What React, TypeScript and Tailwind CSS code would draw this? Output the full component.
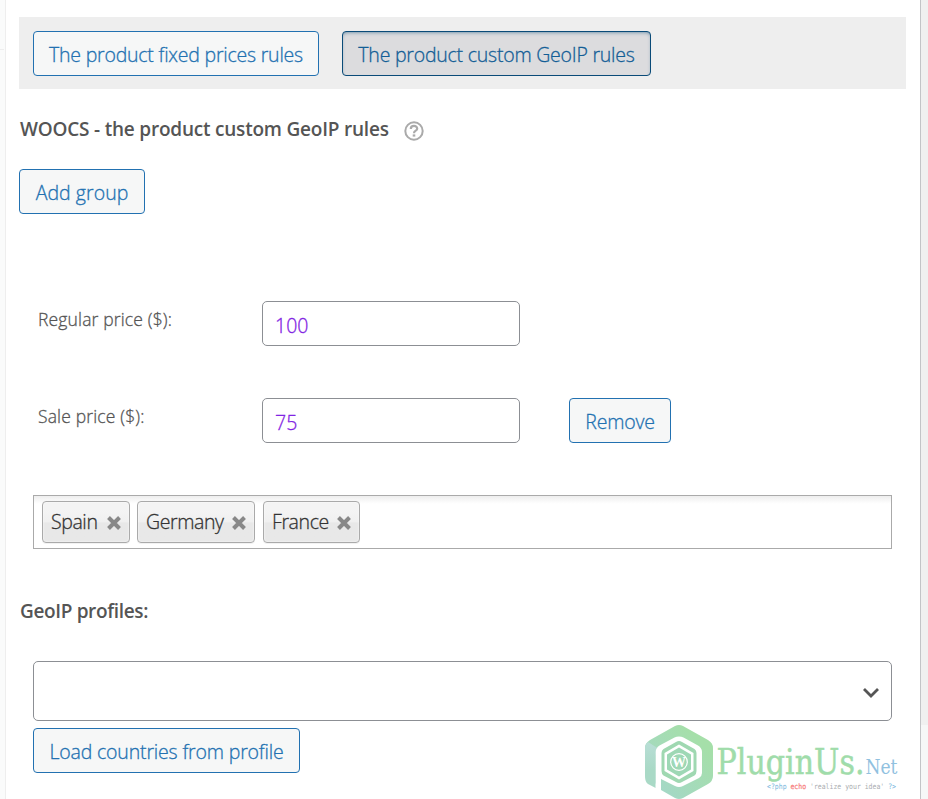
import type { ReactNode } from 'react';

const outline =
  'flex h-[45px] shrink-0 items-center justify-center rounded-[4px] border border-[#2271b1] bg-[#f6f7f7] pt-[3px] text-[19.5px] font-light whitespace-nowrap text-[#2271b1] [-webkit-text-stroke:0.3px]';

const field =
  'h-[45px] w-[258px] rounded-[5px] border border-[#8c8f94] bg-white pt-1 pl-3 text-[19.5px] font-light text-[#8224e3] outline-none [-webkit-text-stroke:0.3px]';

const label =
  'w-[224px] pt-[5px] text-[17.5px] font-light tracking-[0.15px] text-[#555] [-webkit-text-stroke:0.3px]';

function Chip({ className, children }: { className: string; children: ReactNode }) {
  return (
    <div
      className={`flex h-[42px] items-center justify-between rounded-[4px] border border-[#aaa] bg-linear-to-b from-[#f4f4f4] from-20% via-[#f0f0f0] via-50% to-[#e8e8e8] to-52% pr-[7px] pl-2 text-[19.5px] font-light tracking-[-0.4px] text-[#333] shadow-[inset_0_0_2px_#fff,0_1px_0_rgba(0,0,0,0.05)] [-webkit-text-stroke:0.3px] ${className}`}
    >
      <span className="whitespace-nowrap">{children}</span>
      <svg width="16" height="16" viewBox="0 0 16 16" className="mt-0.5 shrink-0">
        <path d="M2.500 2.500 13.500 13.500M13.500 2.500 2.500 13.500" stroke="#888" strokeWidth="4" />
      </svg>
    </div>
  );
}

function Logo() {
  return (
    <svg width="260" height="75" viewBox="0 0 260 75" className="shrink-0">
      <defs>
        <linearGradient id="mark" x1="1" y1="0" x2="0" y2="1">
          <stop offset="0.2" stopColor="#a5dfa9" />
          <stop offset="1" stopColor="#a4d6ce" />
        </linearGradient>
        <linearGradient id="side" x1="0" y1="0" x2="0" y2="1">
          <stop offset="0" stopColor="#b9ded6" />
          <stop offset="0.6" stopColor="#a9d9c6" />
        </linearGradient>
      </defs>
      <path
        d="M30 1Q34 -1 38 1L63 15Q68 18 68 23V51Q68 56 63 59L38 73Q34 75 30 73L16 65V47L34 57.500 52 47V27L34 16.500 16 27V61L5 56Q0 54 0 50V23Q0 18 5 15Z"
        fill="url(#mark)"
      />
      <path d="M3 17 14 24 10.700 30V63L3 59Q0 57 0 51V23Q0 19 3 17Z" fill="url(#side)" />
      <path
        d="M34 11.500Q36.500 11.500 38.500 12.500L53 20.500Q57 23 57 27V48Q57 51 54 53L38 61Q34 63 30 61L16 54V70L10.700 67V27Q10.700 23 14.500 20.500L29.500 12.500Q31.500 11.500 34 11.500Z"
        fill="#fff"
      />
      <path d="M34 16Q35.500 16 37 17L49.500 24Q51.500 25.500 51.500 28V46Q51.500 49 49.500 50.500L37 57Q34 59 31 57L18.500 50.500Q16.500 49 16.500 46V28Q16.500 25.500 18.500 24L31 17Q32.500 16 34 16Z" fill="#9fd8b1" />
      <path d="M34 19.500 48.500 28V46L34 54.500 19.500 46V28Z" fill="#fff" />
      <path d="M34 22.500 46 29.500V44.500L34 51.500 22 44.500V29.500Z" fill="#9ed8b5" />
      <circle cx="34" cy="37" r="8.300" fill="none" stroke="#fff" strokeWidth="1.200" />
      <text x="34" y="42" textAnchor="middle" fontSize="14" fontWeight="700" fontFamily="Liberation Serif, serif" fill="#fff">
        W
      </text>
      <text x="71.500" y="49" fontSize="36" textLength="148" lengthAdjust="spacingAndGlyphs" fontFamily="DejaVu Serif, serif" fill="#a0dcaa" stroke="#a0dcaa" strokeWidth="0.500">
        PluginUs.
      </text>
      <text x="220.500" y="49" fontSize="19.500" textLength="32" lengthAdjust="spacingAndGlyphs" fontFamily="DejaVu Serif Condensed, DejaVu Serif, serif" fill="#91c1df">
        Net
      </text>
      <text x="122" y="63.500" fontSize="7.500" textLength="129" lengthAdjust="spacingAndGlyphs" fontFamily="DejaVu Sans Mono, monospace" fill="#a9acaf" xmlSpace="preserve">
        <tspan fill="#76b5dc">{'<?php '}</tspan>
        <tspan fill="#f77878" stroke="#f77878" strokeWidth="0.200">echo</tspan>
        <tspan>{" 'realize your idea' "}</tspan>
        <tspan fill="#76b5dc">?&gt;</tspan>
      </text>
    </svg>
  );
}

export default function App() {
  return (
    <div className="flex h-[799px] w-[928px] overflow-hidden bg-white font-['Open_Sans','Noto_Sans',sans-serif]">
      <div className="w-[6px] shrink-0 border-r border-[#eee] bg-[#fafbfb]">
        <div className="h-[50px] w-1 border-b border-[#eee]" />
      </div>

      <main className="flex w-[914px] shrink-0 flex-col pt-[17px] pl-[13px]">
        <div className="flex h-[72px] w-[887px] shrink-0 items-center gap-[23px] bg-[#eee] px-[14px]">
          <button className={`${outline} w-[286px] tracking-[-0.22px]`}>The product fixed prices rules</button>
          <button className="flex h-[45px] w-[309px] shrink-0 items-center justify-center rounded-[4px] border border-[#0a4b78] bg-[#dcdcde] pt-[3px] text-[19.5px] font-light tracking-[-0.23px] whitespace-nowrap text-[#135e96] shadow-[inset_0_2px_5px_-3px_#0a4b78] [-webkit-text-stroke:0.3px]">
            The product custom GeoIP rules
          </button>
        </div>

        <div className="mt-6 flex h-8 shrink-0 items-center gap-[15px] pl-px">
          <h2 className="w-[369px] text-[19px] font-semibold tracking-[-0.21px] whitespace-nowrap text-[#555]">
            WOOCS - the product custom GeoIP rules
          </h2>
          <svg width="20" height="20" viewBox="0 0 20 20" className="mt-1 shrink-0" fill="none" stroke="#aaa">
            <circle cx="10" cy="10" r="8.700" strokeWidth="2" />
            <path d="M6.800 8C6.800 4 13.200 4 13.200 7.700C13.200 9.900 10 9.500 10 12.200" strokeWidth="2.200" />
            <path d="M8.700 14.500H11.300" strokeWidth="2.200" />
          </svg>
        </div>

        <button className={`${outline} mt-6 w-[126px] tracking-[0.05px]`}>Add group</button>

        <div className="mt-[87px] flex h-[45px] shrink-0 pl-[19px]">
          <label className={label}>Regular price ($):</label>
          <input className={field} defaultValue="100" />
        </div>

        <div className="mt-[52px] flex h-[45px] shrink-0 pl-[19px]">
          <label className={label}>Sale price ($):</label>
          <input className={field} defaultValue="75" />
          <button className={`${outline} ml-[49px] w-[102px] tracking-[-0.2px]`}>Remove</button>
        </div>

        <div className="mt-[52px] ml-[14px] flex h-[54px] w-[859px] shrink-0 border border-[#aaa] bg-white bg-linear-to-b from-[#eee] to-white to-15% pt-[5px] pl-2">
          <Chip className="w-[88px]">Spain</Chip>
          <Chip className="ml-[7px] w-[118px]">Germany</Chip>
          <Chip className="ml-2 w-[97px]">France</Chip>
        </div>

        <h2 className="mt-[46px] h-8 shrink-0 pl-px text-[19px] leading-8 font-semibold tracking-[-0.35px] text-[#555]">GeoIP profiles:</h2>

        <div className="mt-[34px] ml-[14px] flex h-[60px] w-[859px] shrink-0 items-center justify-end rounded-[5px] border border-[#8c8f94] bg-white pr-[11px]">
          <svg width="18" height="12" viewBox="0 0 18 12" className="mt-[3px]">
            <path d="M2 2 9 9 16 2" fill="none" stroke="#555" strokeWidth="2.800" />
          </svg>
        </div>

        <div className="mt-1 flex shrink-0 items-start pl-[14px]">
          <button className={`${outline} mt-[3px] w-[267px] tracking-[-0.17px]`}>Load countries from profile</button>
          <div className="ml-[345px]">
            <Logo />
          </div>
        </div>
      </main>

      <div className="flex w-2 shrink-0 flex-col border-l border-[#c3c4c7] bg-[#f6f7f7]">
        <div className="h-[725px] bg-[#f0f0f0]" />
      </div>
    </div>
  );
}
